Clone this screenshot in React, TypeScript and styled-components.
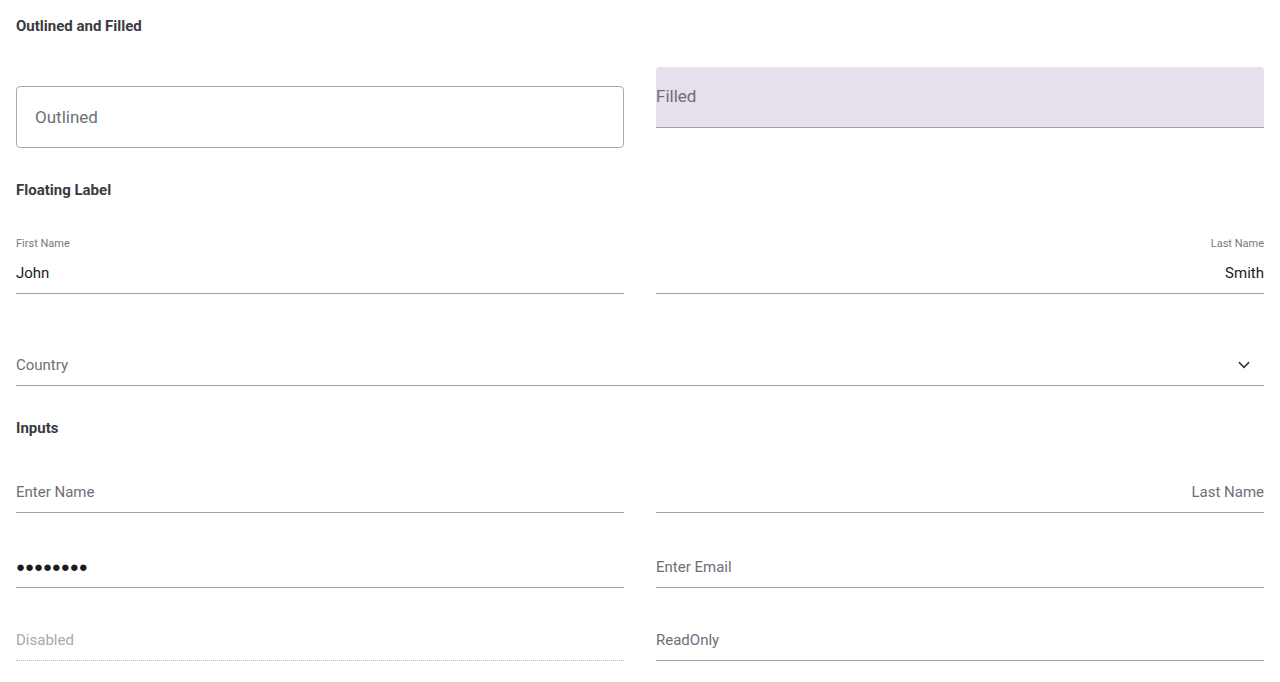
import styled, { createGlobalStyle } from "styled-components";

const GlobalStyle = createGlobalStyle`
  body {
    margin: 0;
    background: #ffffff;
    font-family: Roboto, "Liberation Sans", sans-serif;
    color: #1c1b1f;
  }
`;

const Page = styled.div`
  padding: 17px 16px 0;
`;

const Heading = styled.h3<{ $top?: number }>`
  margin: ${props => props.$top ?? 0}px 0 0;
  font-size: 15px;
  line-height: 18px;
  font-weight: 700;
  color: #3b3a42;
`;

const Row = styled.div<{ $top: number }>`
  display: grid;
  grid-template-columns: 1fr 1fr;
  column-gap: 32px;
  align-items: start;
  margin-top: ${props => props.$top}px;
`;

const Outlined = styled.div`
  margin-top: 19px;
  height: 62px;
  box-sizing: border-box;
  border: 1px solid #a9a8b0;
  border-radius: 4px;
  display: flex;
  align-items: center;
  padding: 0 18px;
  font-size: 17px;
  color: #6f6e78;
`;

const Filled = styled.div`
  height: 61px;
  box-sizing: border-box;
  background: #e7dfeb;
  border-radius: 4px 4px 0 0;
  border-bottom: 1px solid #a09fa8;
  display: flex;
  align-items: center;
  padding-bottom: 2px;
  font-size: 17px;
  color: #6f6e78;
`;

const FloatField = styled.div<{ $right?: boolean }>`
  margin-top: 38px;
  text-align: ${props => (props.$right ? "right" : "left")};
`;

const FloatLabel = styled.div`
  font-size: 11px;
  line-height: 14px;
  color: #77767f;
`;

const Line = styled.div<{ $top?: number; $dotted?: boolean }>`
  margin-top: ${props => props.$top ?? 0}px;
  display: flex;
  align-items: center;
  justify-content: space-between;
  height: 20px;
  padding-bottom: 10px;
  border-bottom: 1px ${props => (props.$dotted ? "dotted #b9b8c0" : "solid #a09fa8")};
`;

const Value = styled.span<{ $right?: boolean }>`
  flex: 1;
  text-align: ${props => (props.$right ? "right" : "left")};
  font-size: 15px;
  color: #1c1b1f;
`;

const Placeholder = styled.span<{ $right?: boolean; $disabled?: boolean }>`
  flex: 1;
  text-align: ${props => (props.$right ? "right" : "left")};
  font-size: 15px;
  color: ${props => (props.$disabled ? "#a9a8b0" : "#6f6e78")};
`;

const Dots = styled.span`
  font-size: 15px;
  letter-spacing: -0.1px;
  color: #1c1b1f;
`;

const Chevron = () => (
  <svg width="16" height="16" viewBox="0 0 24 24" fill="none" stroke="#3b3a42" strokeWidth="2.4" strokeLinecap="round" strokeLinejoin="round" style={{ marginRight: 12 }}>
    <path d="M5 8.5l7 7 7-7" />
  </svg>
);

export default function App() {
  return (
    <>
      <GlobalStyle />
      <Page>
        <Heading>Outlined and Filled</Heading>
        <Row $top={32}>
          <Outlined>Outlined</Outlined>
          <Filled>Filled</Filled>
        </Row>

        <Heading $top={33}>Floating Label</Heading>
        <Row $top={0}>
          <FloatField>
            <FloatLabel>First Name</FloatLabel>
            <Line $top={12}>
              <Value>John</Value>
            </Line>
          </FloatField>
          <FloatField $right>
            <FloatLabel>Last Name</FloatLabel>
            <Line $top={12}>
              <Value $right>Smith</Value>
            </Line>
          </FloatField>
        </Row>

        <Line $top={61}>
          <Placeholder>Country</Placeholder>
          <Chevron />
        </Line>

        <Heading $top={33}>Inputs</Heading>
        <Row $top={45}>
          <Line>
            <Placeholder>Enter Name</Placeholder>
          </Line>
          <Line>
            <Placeholder $right>Last Name</Placeholder>
          </Line>
        </Row>
        <Row $top={44}>
          <Line>
            <Dots>●●●●●●●●</Dots>
          </Line>
          <Line>
            <Placeholder>Enter Email</Placeholder>
          </Line>
        </Row>
        <Row $top={42}>
          <Line $dotted>
            <Placeholder $disabled>Disabled</Placeholder>
          </Line>
          <Line>
            <Placeholder>ReadOnly</Placeholder>
          </Line>
        </Row>
      </Page>
    </>
  );
}
